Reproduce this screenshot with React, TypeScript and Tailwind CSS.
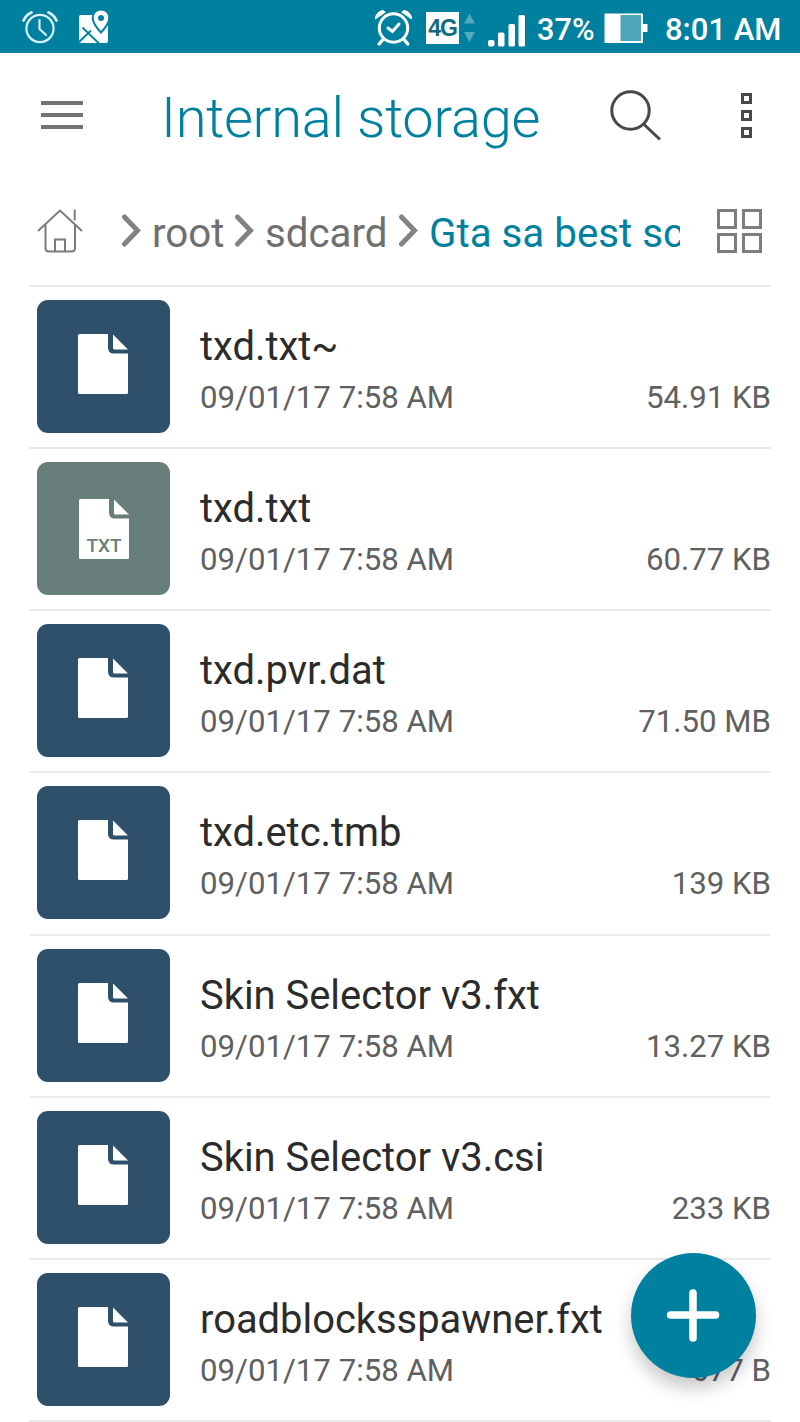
type FileEntry = {
  name: string;
  date: string;
  size: string;
  kind?: "txt";
};

const files: FileEntry[] = [
  { name: "txd.txt~", date: "09/01/17 7:58 AM", size: "54.91 KB" },
  { name: "txd.txt", date: "09/01/17 7:58 AM", size: "60.77 KB", kind: "txt" },
  { name: "txd.pvr.dat", date: "09/01/17 7:58 AM", size: "71.50 MB" },
  { name: "txd.etc.tmb", date: "09/01/17 7:58 AM", size: "139 KB" },
  { name: "Skin Selector v3.fxt", date: "09/01/17 7:58 AM", size: "13.27 KB" },
  { name: "Skin Selector v3.csi", date: "09/01/17 7:58 AM", size: "233 KB" },
  { name: "roadblocksspawner.fxt", date: "09/01/17 7:58 AM", size: "677 B" },
];

function StatusBar() {
  return (
    <div className="flex h-[53px] shrink-0 items-center bg-[#00809f] text-[30.7px] font-medium text-white">
      <svg className="ml-[20px] shrink-0" width="40" height="53" viewBox="0 0 40 53" fill="none" stroke="#d9f2f7" strokeWidth="2.2" strokeLinecap="round" aria-hidden>
        <circle cx="20" cy="28.5" r="13.6" />
        <path d="M19.5 20v9l6.5 6" />
        <path d="M3.5 20.5q2.5-5.5 8-8M28.5 12.5q5.5 2.5 8 8" strokeWidth="2.8" />
      </svg>
      <svg className="ml-[18px] shrink-0" width="32" height="53" viewBox="78 0 32 53" aria-hidden>
        <path d="M81 15h25.5v28H81a2 2 0 0 1-2-2V17a2 2 0 0 1 2-2z" fill="#fff" />
        <path d="M106 25h2v16a2 2 0 0 1-2 2z" fill="#fff" />
        <path d="M79 42 91 30.5M82.5 27.5 99.5 44" stroke="#00809f" strokeWidth="1.8" fill="none" />
        <path d="M98 8h12v16h-5z" fill="#00809f" />
        <path d="M101 9.5c-5 0-8.3 3.5-8.3 8.3 0 6 8.3 14.7 8.3 14.7s8.3-8.7 8.3-14.7c0-4.8-3.3-8.3-8.3-8.3z" fill="#fff" stroke="#00809f" strokeWidth="2" />
        <circle cx="101" cy="18" r="3" fill="#00809f" />
      </svg>
      <div className="flex-1" />
      <svg className="shrink-0" width="40" height="53" viewBox="373 0 40 53" fill="none" stroke="#fff" strokeLinecap="round" aria-hidden>
        <circle cx="393.5" cy="28" r="14.2" strokeWidth="3" />
        <path d="m388 28 4.5 3.5 6.5-7.5" strokeWidth="3" />
        <path d="m382.5 40-3.3 4M404.5 40l3.3 4" strokeWidth="3.4" />
        <path d="M375.5 18.5a8 8 0 0 1 7.5-8l2 1.5zM411.5 18.5a8 8 0 0 0-7.5-8l-2 1.5z" fill="#fff" strokeWidth="1" strokeLinejoin="round" />
      </svg>
      <div className="ml-[13px] mt-[3px] flex h-[32px] w-[33px] items-center justify-center bg-white font-['Liberation_Sans',sans-serif] text-[23px] font-bold tracking-[-1px] text-[#126a80]">
        4G
      </div>
      <svg className="ml-[4px] shrink-0" width="13" height="53" viewBox="463 0 13 53" fill="#54a9be" aria-hidden>
        <path d="m469.5 13.5 5.5 10h-11zM469.5 42l5.5-10h-11z" />
      </svg>
      <svg className="ml-[11px] shrink-0" width="39" height="53" viewBox="487 0 39 53" fill="#fff" aria-hidden>
        <rect x="488" y="40" width="6.5" height="6.5" rx="2" />
        <rect x="498" y="32.5" width="6.5" height="14" rx="1.5" />
        <rect x="508.5" y="24" width="6.5" height="22.5" rx="1.5" />
        <rect x="518.5" y="15" width="6.5" height="31.5" rx="1.5" />
      </svg>
      <span className="ml-[11px] w-[59px] whitespace-nowrap pt-[7px]">37%</span>
      <svg className="ml-[8px] shrink-0" width="44" height="53" viewBox="604 0 44 53" aria-hidden>
        <path d="M604.5 13.5H643v10.5h4.5v8H643v11h-38.5z" fill="#fff" />
        <rect x="620.5" y="15" width="20.5" height="26" fill="#4ea6bc" />
      </svg>
      <span className="ml-[17px] mr-[17px] w-[118px] whitespace-nowrap pt-[7px] text-[31px]">8:01 AM</span>
    </div>
  );
}

function TitleBar() {
  return (
    <header className="flex h-[124px] shrink-0 items-center pl-[41px] pr-[48px]">
      <div className="flex w-[42px] flex-col gap-[8px]">
        <span className="h-[4px] bg-[#747474]" />
        <span className="h-[4px] bg-[#747474]" />
        <span className="h-[4px] bg-[#747474]" />
      </div>
      <h1 className="ml-[78px] w-[390px] whitespace-nowrap pt-[6px] text-[56px] font-light leading-none tracking-[-0.28px] text-[#00809f]">
        Internal storage
      </h1>
      <div className="flex-1" />
      <svg width="52" height="52" viewBox="609 89 52 52" fill="none" stroke="#484848" strokeWidth="3" aria-hidden>
        <circle cx="630.5" cy="110.5" r="18.7" />
        <path d="m643 123.5 17 16" />
      </svg>
      <div className="ml-[80px] flex flex-col gap-[6px]">
        <span className="size-[11px] border-[3px] border-[#484848]" />
        <span className="size-[11px] border-[3px] border-[#484848]" />
        <span className="size-[11px] border-[3px] border-[#484848]" />
      </div>
    </header>
  );
}

function Chevron() {
  return (
    <svg className="shrink-0" width="20" height="36" viewBox="0 0 20 36" fill="none" stroke="#838383" strokeWidth="5" strokeLinecap="round" aria-hidden>
      <path d="m3.5 4 13 13.5-13 13.5" />
    </svg>
  );
}

function Breadcrumbs() {
  return (
    <nav className="flex h-[108px] shrink-0 items-center pl-[37px] text-[40.3px] text-[#6f6f6f]">
      <svg className="shrink-0" width="46" height="46" viewBox="37 208 46 46" fill="none" stroke="#7b7b7b" strokeWidth="2" aria-hidden>
        <path d="m38 231 22-20.5L82 231" />
        <path d="M45.5 224.5V248q0 3.5 3.5 3.5h22q4 0 4-3.5v-23.5M74.7 209.5v11M55 251.5v-12h10v12" />
      </svg>
      <div className="ml-[38px] flex w-[559px] items-center overflow-hidden whitespace-nowrap">
        <Chevron />
        <span className="ml-[11px] w-[82px] shrink-0 pt-[6px]">root</span>
        <Chevron />
        <span className="ml-[11px] w-[133px] shrink-0 pt-[6px]">sdcard</span>
        <Chevron />
        <span className="ml-[11px] shrink-0 pt-[6px] text-[#00809f]">Gta sa best sc</span>
      </div>
      <div className="ml-[37px] grid grid-cols-2 gap-x-[5px] gap-y-[4px]">
        <span className="size-[20px] border-[3px] border-[#7d7d7d]" />
        <span className="size-[20px] border-[3px] border-[#7d7d7d]" />
        <span className="size-[20px] border-[3px] border-[#7d7d7d]" />
        <span className="size-[20px] border-[3px] border-[#7d7d7d]" />
      </div>
    </nav>
  );
}

function PageIcon() {
  return (
    <svg width="50" height="60" viewBox="0 0 50 60" fill="#fff" aria-hidden>
      <path d="M1.5 0H30v13.5q0 6 6 6h14v39a1.5 1.5 0 0 1-1.5 1.5h-47A1.5 1.5 0 0 1 0 58.5v-57A1.5 1.5 0 0 1 1.5 0z" />
      <path d="M35 .5 50 15.5H36.5Q35 15.5 35 14z" />
    </svg>
  );
}

function FileRow({ file }: { file: FileEntry }) {
  const isTxt = file.kind === "txt";
  return (
    <li className="mx-[29px] flex h-[162.17px] shrink-0 border-t-2 border-[#ebebeb]">
      <div
        className={`ml-[8px] mt-[13px] flex size-[133px] shrink-0 rounded-[11px] ${
          isTxt ? "bg-[#687e7b] pl-[42px] pt-[37px]" : "bg-[#2f506b] pl-[41px] pt-[34px]"
        }`}
      >
        <div className="relative h-[60px] w-[50px]">
          <PageIcon />
          {isTxt && (
            <span className="absolute inset-x-0 bottom-[4px] text-center text-[19px] font-medium leading-none text-[#687e7b]">
              TXT
            </span>
          )}
        </div>
      </div>
      <div className="ml-[30px] flex-1 whitespace-nowrap pt-[35px]">
        <div className="text-[39.9px] leading-[50px] text-[#2b2b2b]">{file.name}</div>
        <div className="flex justify-between pt-[5px] text-[31.2px] leading-[42px] text-[#606060]">
          <span>{file.date}</span>
          <span>{file.size}</span>
        </div>
      </div>
    </li>
  );
}

export default function App() {
  return (
    <div className="relative flex h-[1422px] w-[800px] flex-col overflow-hidden bg-white font-['Roboto',sans-serif]">
      <StatusBar />
      <TitleBar />
      <Breadcrumbs />
      <ul className="flex flex-col">
        {files.map((file) => (
          <FileRow key={file.name} file={file} />
        ))}
        <li className="mx-[29px] h-[2px] bg-[#ebebeb]" />
      </ul>
      <button
        type="button"
        aria-label="Add"
        className="absolute left-[631px] top-[1253px] flex size-[125px] items-center justify-center rounded-full bg-[#00809f] shadow-[0_10px_18px_rgba(0,0,0,0.22)]"
      >
        <svg width="53" height="53" viewBox="0 0 53 53" stroke="#fff" strokeWidth="7.5" strokeLinecap="round" aria-hidden>
          <path d="M26 4v45M3.5 26h45" />
        </svg>
      </button>
    </div>
  );
}
